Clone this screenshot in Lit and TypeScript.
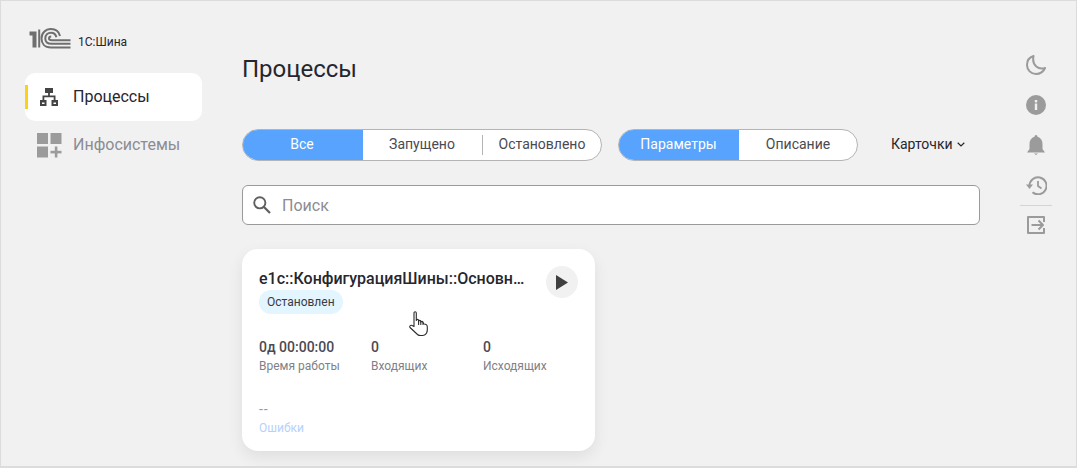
import { LitElement, html, css } from "lit";
import { customElement } from "lit/decorators.js";

@customElement("app-root")
export class AppRoot extends LitElement {
  static styles = css`
    :host { display: block; width: 1077px; height: 468px; font-family: Roboto, "Liberation Sans", sans-serif; }
    * { box-sizing: border-box; }
    .page { width: 1077px; height: 468px; background: #f1f1f1; border: 1px solid #dcdcdc; border-bottom-width: 2px; display: flex; overflow: hidden; }
    .side { width: 241px; flex: none; padding: 24px 0 0 24px; }
    .brand { display: flex; align-items: flex-end; gap: 7px; height: 24px; padding-left: 4px; font-size: 12px; color: #26262e; }
    .brand svg { display: block; }
    .brand span { line-height: 14px; margin-bottom: 0; }
    .nav { margin-top: 24px; width: 177px; }
    .item { height: 48px; display: flex; align-items: center; border-radius: 10px; font-size: 16px; color: #8c8c94; position: relative; }
    .item span { margin-top: -2px; }
    .item.on { background: #fff; color: #26262e; }
    .item.on::before { content: ""; position: absolute; left: 0; top: 12px; width: 3px; height: 24px; background: #fcd116; }
    .ico { width: 48px; display: flex; justify-content: center; flex: none; }
    .main { width: 738px; flex: none; }
    h1 { margin: 0; padding-top: 54px; font-size: 24px; font-weight: 400; line-height: 28px; color: #26262e; }
    .filters { display: flex; margin-top: 46px; align-items: center; }
    .seg { display: flex; height: 32px; border-radius: 16px; border: 1px solid #b4b4b4; background: #fff; overflow: hidden; font-size: 14px; color: #4a4a52; }
    .seg > div { display: flex; align-items: center; justify-content: center; padding: 0 1px 2px 0; }
    .seg > .sep { padding: 0; }
    .seg > .n { padding-right: 0; }
    .seg .act { background: #57a3fd; color: #fff; margin: -1px 0 -1px -1px; }
    .sep { width: 1px; height: 20px; background: #b4b4b4; align-self: center; }
    .view { display: flex; align-items: center; gap: 4px; font-size: 14px; color: #26262e; margin-left: 33px; padding-bottom: 2px; }
    .search { margin-top: 24px; height: 40px; border: 1px solid #9a9a9a; border-radius: 6px; background: #fff; display: flex; align-items: center; padding-left: 9px; gap: 10px; font-size: 16px; color: #8c8c94; }
    .card { position: relative; margin-top: 24px; width: 353px; height: 202px; background: #fff; border-radius: 16px; box-shadow: 0 6px 16px rgba(0,0,0,.08); padding: 20px 17px 0; }
    .title { font-size: 16px; font-weight: 500; line-height: 20px; color: #26262e; width: 268px; white-space: nowrap; overflow: hidden; text-overflow: ellipsis; }
    .badge { display: inline-block; margin-top: 1px; height: 24px; line-height: 24px; padding: 0 8px; border-radius: 12px; background: #e3f5ff; font-size: 12px; color: #3a3a42; }
    .play { position: absolute; right: 17px; top: 17px; width: 32px; height: 32px; border-radius: 50%; background: #f1f1f1; display: flex; align-items: center; justify-content: center; }
    .stats { display: grid; grid-template-columns: 112px 112px 112px; margin-top: 25px; }
    .v { font-size: 14px; font-weight: 500; line-height: 16px; color: #4a4a52; }
    .l { font-size: 12px; line-height: 14px; margin-top: 4px; color: #7f7f88; }
    .err { margin-top: 28px; }
    .err .v { color: #6f9ff0; font-weight: 400; letter-spacing: 1px; }
    .err .l { color: #b5d2fb; margin-top: 4px; }
    .cursor { position: absolute; left: 167px; top: 62px; }
    .rail { flex: none; width: 40px; margin-left: 36px; padding-top: 44px; display: flex; flex-direction: column; align-items: center; }
    .rail .b { height: 40px; display: flex; align-items: center; justify-content: center; flex: none; }
    .rail hr { width: 32px; border: 0; border-top: 1px solid #d4d4d4; margin: 0 0 -1px; }
  `;

  render() {
    const g = "#9b9b9b";
    return html`<div class="page">
      <div class="side">
        <div class="brand">
          <svg width="42" height="21" viewBox="0 0 42 21" fill="none" stroke="#6f6f6f" style="margin-top:2px">
            <path d="M0.500 5.500 H5.500 V19.500" stroke-width="4" />
            <path d="M10.200 1.500 V19.500" stroke-width="2" />
            <path d="M41.500 19.500 H22 C15.500 19.500 12.500 15.500 12.500 10.500 C12.500 5 16.500 1 22 1 C27 1 30 3.800 31 8" stroke-width="2" />
            <path d="M41.500 15.800 H22.500 C18.500 15.800 16.300 13.500 16.300 10.500 C16.300 7 18.800 4.700 22 4.700 C25 4.700 26.800 6.500 27.400 9.300" stroke-width="2" />
            <path d="M41.500 12.200 H22.800 C21 12.200 20 11.500 20 10.500 C20 9.300 21 8.400 22.200 8.400" stroke-width="2" />
          </svg>
          <span>1С:Шина</span>
        </div>
        <div class="nav">
          <div class="item on">
            <div class="ico"><svg width="18" height="18" viewBox="0 0 18 18" fill="#444">
              <rect x="5" y="0" width="8" height="5" /><rect x="8.100" y="5" width="1.800" height="3" />
              <path d="M2.500 7.500 H15.500 V12 H13.700 V9.300 H4.300 V12 H2.500 Z" />
              <path fill-rule="evenodd" d="M0 12 H6.500 V18 H0 Z M2 14.500 V16 H4.500 V14.500 Z M11.500 12 H18 V18 H11.500 Z M13.500 14.500 V16 H16 V14.500 Z" />
            </svg></div>
            <span>Процессы</span>
          </div>
          <div class="item">
            <div class="ico"><svg width="25" height="25" viewBox="0 0 25 25" fill="${g}">
              <rect x="0" y="0" width="11" height="11" /><rect x="13.500" y="0" width="11" height="11" /><rect x="0" y="13.500" width="11" height="11" />
              <rect x="17.800" y="13.500" width="2.600" height="11" /><rect x="13.500" y="17.800" width="11" height="2.600" />
            </svg></div>
            <span>Инфосистемы</span>
          </div>
        </div>
      </div>

      <div class="main">
        <h1>Процессы</h1>
        <div class="filters">
          <div class="seg" style="width:360px">
            <div class="act" style="width:121px">Все</div>
            <div style="width:119px">Запущено</div>
            <div class="sep"></div>
            <div class="n" style="width:118px">Остановлено</div>
          </div>
          <div class="seg" style="width:240px;margin-left:16px">
            <div class="act n" style="width:121px">Параметры</div>
            <div class="n" style="width:118px">Описание</div>
          </div>
          <div class="view">Карточки
            <svg width="8" height="5" viewBox="0 0 8 5" fill="none" stroke="#26262e" stroke-width="1.200"><path d="M.7.8 4 4 7.3.8" /></svg>
          </div>
        </div>
        <div class="search">
          <svg width="20" height="20" viewBox="0 0 20 20" fill="none" stroke="#5f5f5f" stroke-width="1.900">
            <circle cx="7.800" cy="7.800" r="5.600" /><path d="M12 12 L18 18" stroke-width="2.200" />
          </svg>
          <span>Поиск</span>
        </div>
        <div class="card">
          <div class="title">e1c::КонфигурацияШины::Основной::Процесс</div>
          <div class="badge">Остановлен</div>
          <div class="play"><svg width="12" height="15" viewBox="0 0 12 15" fill="#3f3f3f"><path d="M0 0 L12 7.500 L0 15 Z" /></svg></div>
          <svg class="cursor" width="19" height="25" viewBox="0 0 19 25" fill="#fff" stroke="#2b2b2b" stroke-width="1.100" stroke-linejoin="round" stroke-linecap="round">
            <path d="M5 15.500 V2 C5 .4 7.300 .4 7.300 2 V9.500 C7.300 8 9.600 8 9.600 9.500 V10.500 C9.600 9 11.800 9 11.800 10.500 V11.300 C11.800 10 14 10 14 11.500 L15 13 C17.500 13 18.300 14 18.300 16 V19 C18.300 21 17.500 23 15.500 24 C13 24.800 10 24.800 8.500 23.500 L1 16.500 C.2 15.500 1.500 13.500 3.200 14.500 Z" />
            <path d="M9.600 10.500 V13.500 M11.800 11 V13.500 M14 11.500 V13.500" />
          </svg>
          <div class="stats">
            <div><div class="v">0д 00:00:00</div><div class="l">Время работы</div></div>
            <div><div class="v">0</div><div class="l">Входящих</div></div>
            <div><div class="v">0</div><div class="l">Исходящих</div></div>
          </div>
          <div class="err"><div class="v">--</div><div class="l">Ошибки</div></div>
        </div>
      </div>

      <div class="rail">
        <div class="b"><svg width="20" height="20" viewBox="0 0 20 20" fill="none" stroke="${g}" stroke-width="2" stroke-linejoin="round"><path d="M7.500 1 C3.500 2.200 1 5.500 1 10 C1 15 5 19 10 19 C14 19 17.500 16.500 19 13 C13 15 5.500 11 7.500 1 Z" /></svg></div>
        <div class="b"><svg width="20" height="20" viewBox="0 0 20 20"><circle cx="10" cy="10" r="10" fill="${g}" /><rect x="8.800" y="8.500" width="2.400" height="6.500" fill="#f1f1f1" /><rect x="8.800" y="5" width="2.400" height="2.400" fill="#f1f1f1" /></svg></div>
        <div class="b"><svg width="18" height="20" viewBox="0 0 18 20" fill="${g}"><path d="M9 0 C10 0 10.500 .8 10.500 1.800 C13.800 2.800 15.500 5.500 15.500 9 V14 L18 17.500 H0 L2.500 14 V9 C2.500 5.500 4.200 2.800 7.500 1.800 C7.500 .8 8 0 9 0 Z M7 18.500 H11 L9 20 Z" /></svg></div>
        <div class="b"><svg width="21" height="19" viewBox="0 0 21 19" fill="none" stroke="${g}" stroke-width="2"><path d="M3.500 10 A8.500 8.500 0 1 1 6.500 16.300" /><path d="M0 8.500 H7 L3.500 13 Z" fill="${g}" stroke="none" /><path d="M12 5 V10 L15.500 12.500" stroke-width="1.800"/></svg></div>
        <hr />
        <div class="b"><svg width="18" height="18" viewBox="0 0 18 18" fill="none" stroke="${g}" stroke-width="2" stroke-linejoin="round"><path d="M17 6 V1 H1 V17 H17 V12" /><path d="M4.500 9 H16 M11.500 4.500 L16 9 L11.500 13.500" /></svg></div>
      </div>
    </div>`;
  }
}
